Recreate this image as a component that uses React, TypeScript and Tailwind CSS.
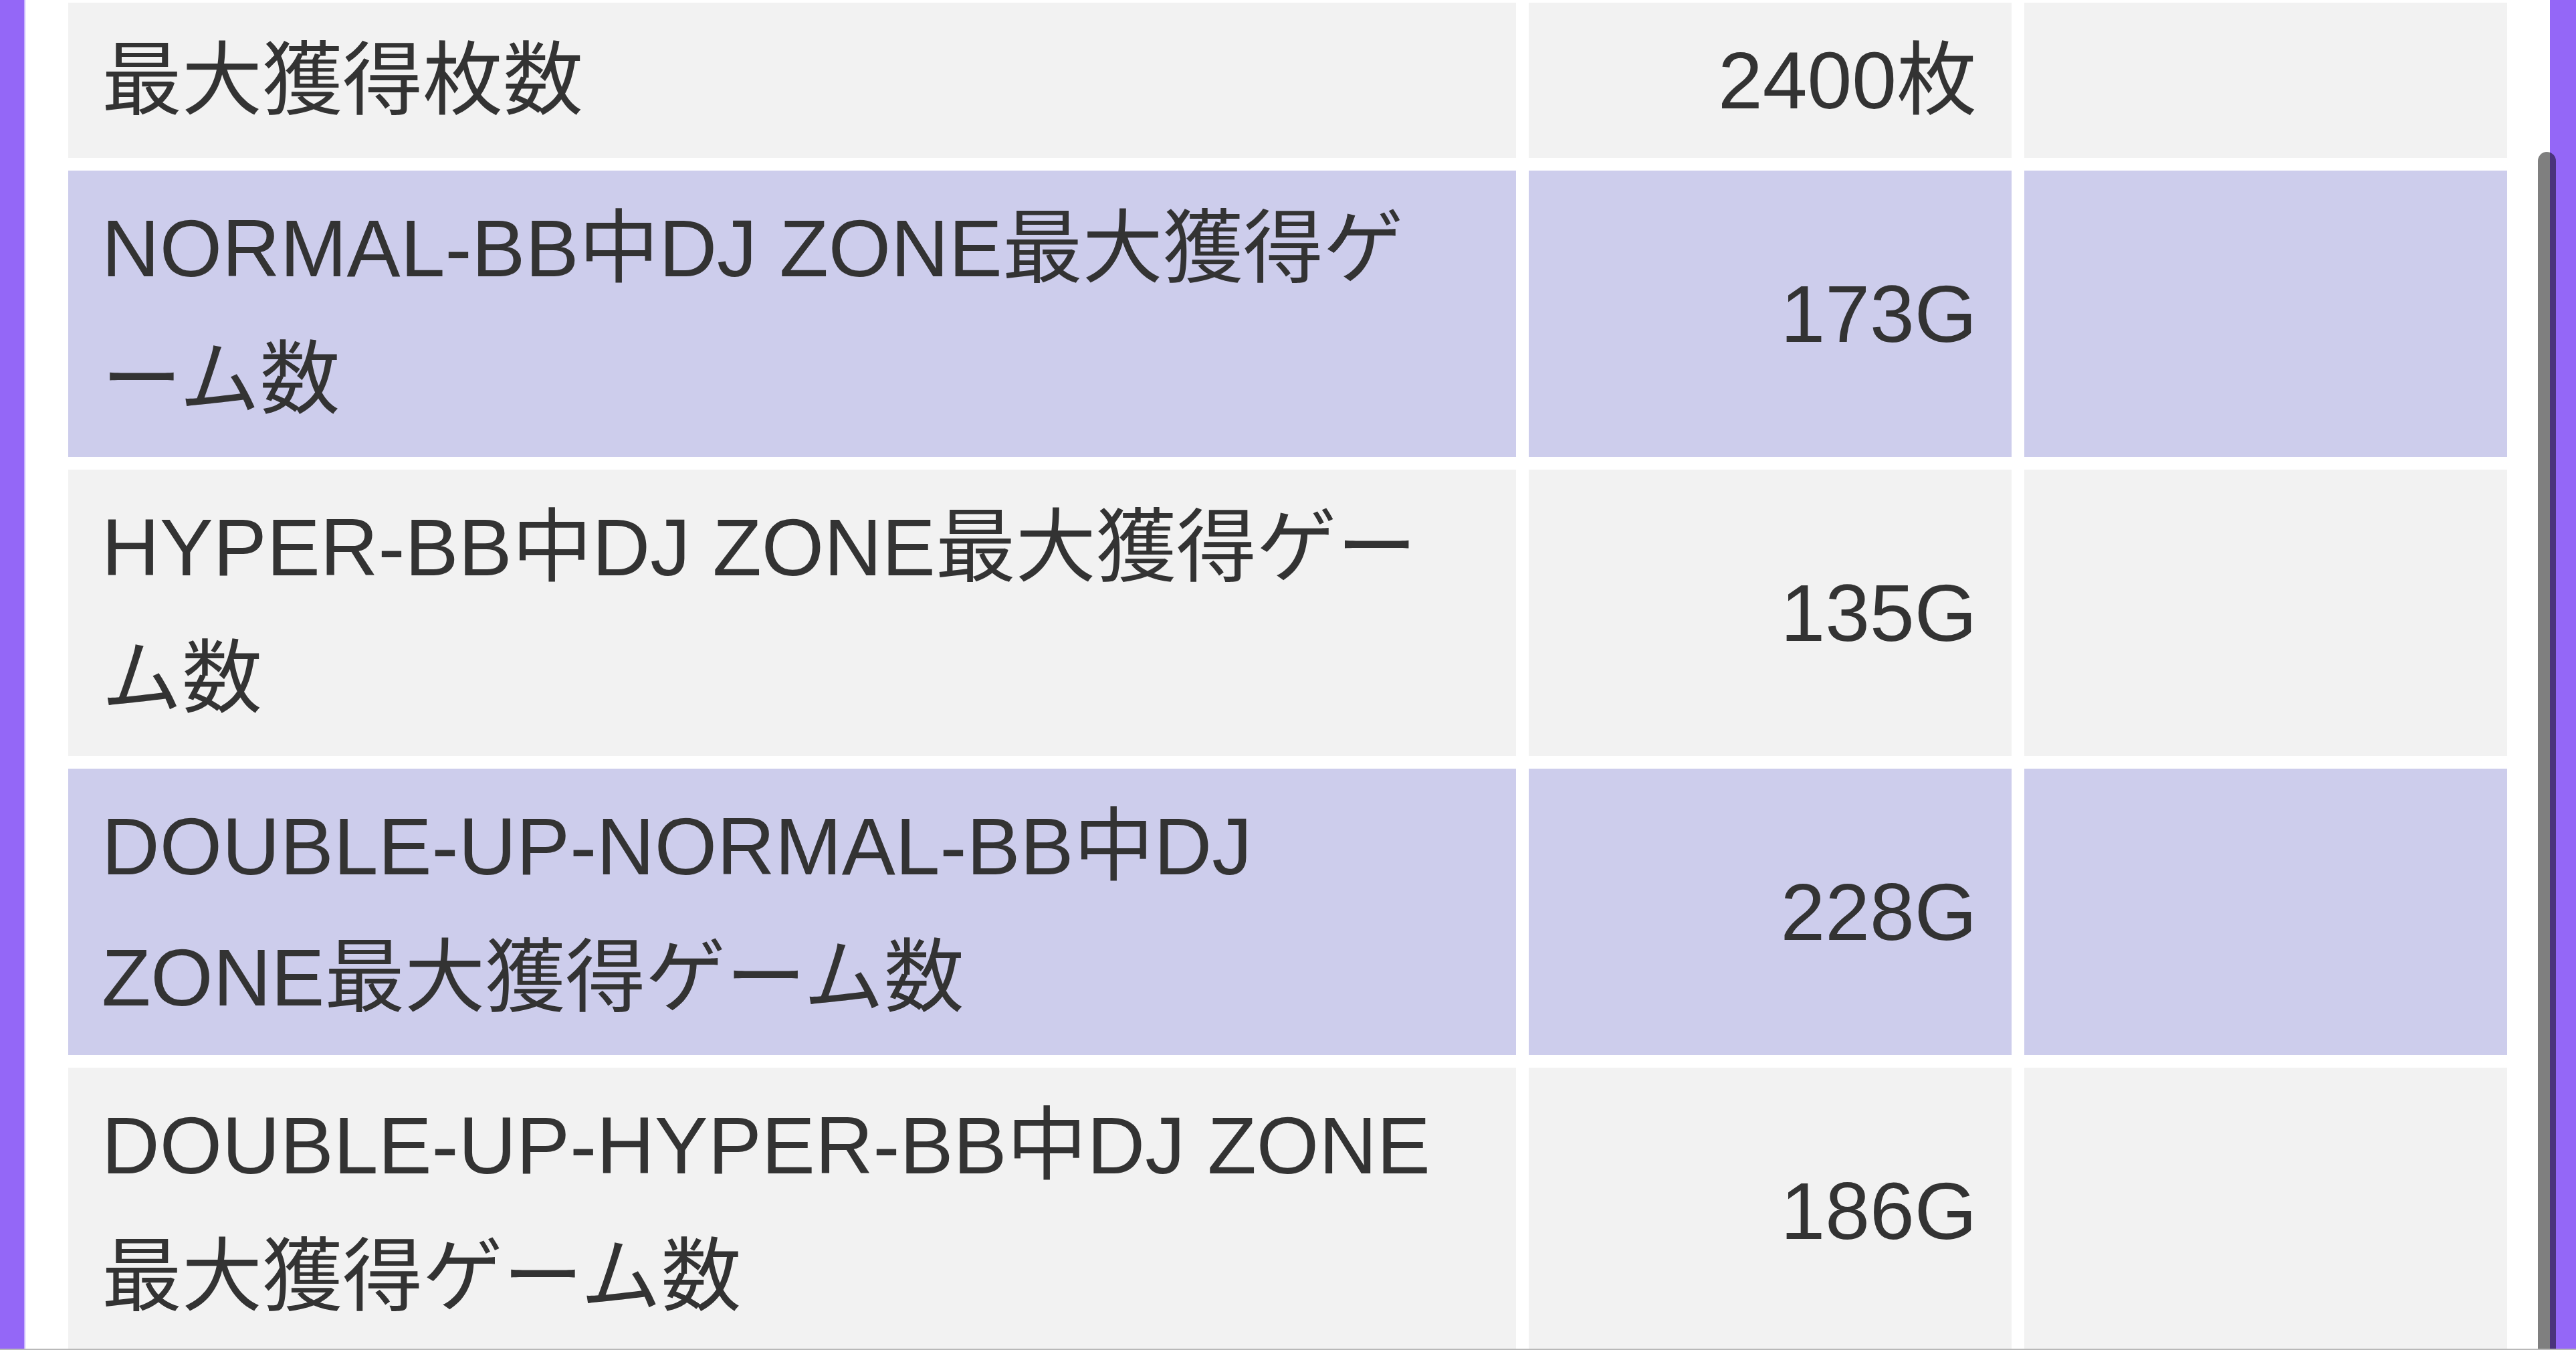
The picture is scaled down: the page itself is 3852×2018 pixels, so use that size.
import React from "react";

type Row = { label: React.ReactNode; value: string; tint: boolean };

const rows: Row[] = [
  { label: "最大獲得枚数", value: "2400枚", tint: false },
  {
    label: (
      <>
        NORMAL-BB中DJ ZONE最大獲得ゲ
        <br />
        ーム数
      </>
    ),
    value: "173G",
    tint: true,
  },
  {
    label: (
      <>
        HYPER-BB中DJ ZONE最大獲得ゲー
        <br />
        ム数
      </>
    ),
    value: "135G",
    tint: false,
  },
  {
    label: (
      <>
        DOUBLE-UP-NORMAL-BB中DJ
        <br />
        ZONE最大獲得ゲーム数
      </>
    ),
    value: "228G",
    tint: true,
  },
  {
    label: (
      <>
        DOUBLE-UP-HYPER-BB中DJ ZONE
        <br />
        最大獲得ゲーム数
      </>
    ),
    value: "186G",
    tint: false,
  },
];

export default function App() {
  return (
    <div
      className="relative w-[3852px] h-[2018px] overflow-hidden bg-white text-[#333333]"
      style={{ fontFamily: '"Liberation Sans", "Noto Sans CJK JP", sans-serif' }}
    >
      <div className="flex h-[2016px] overflow-hidden">
        <div className="w-[36px] shrink-0 bg-[#9467f7]" />
        <div className="w-[2px] shrink-0 bg-[#c9b6fb]" />
        <div className="flex-1 pl-[64px] pr-[64px] pt-[4px]">
          <div className="grid grid-cols-[2165px_722px_722px] gap-[19px] text-[120px] leading-[196px]">
            {rows.map((r, i) => {
              const bg = r.tint ? "bg-[#cdcdec]" : "bg-[#f2f2f2]";
              return (
                <React.Fragment key={i}>
                  <div className={`${bg} px-[50px] py-[18px] whitespace-nowrap flex items-center`}>
                    <div>{r.label}</div>
                  </div>
                  <div className={`${bg} px-[52px] py-[18px] flex items-center justify-end whitespace-nowrap`}>
                    {r.value}
                  </div>
                  <div className={`${bg}`} />
                </React.Fragment>
              );
            })}
          </div>
        </div>
        <div className="w-[39px] shrink-0 bg-[#9467f7]" />
      </div>
      <div className="h-[2px] bg-[#b9b9b9]" />
      <div className="absolute left-[3795px] top-[227px] w-[27px] h-[1789px] rounded-t-full bg-black/50" />
    </div>
  );
}
